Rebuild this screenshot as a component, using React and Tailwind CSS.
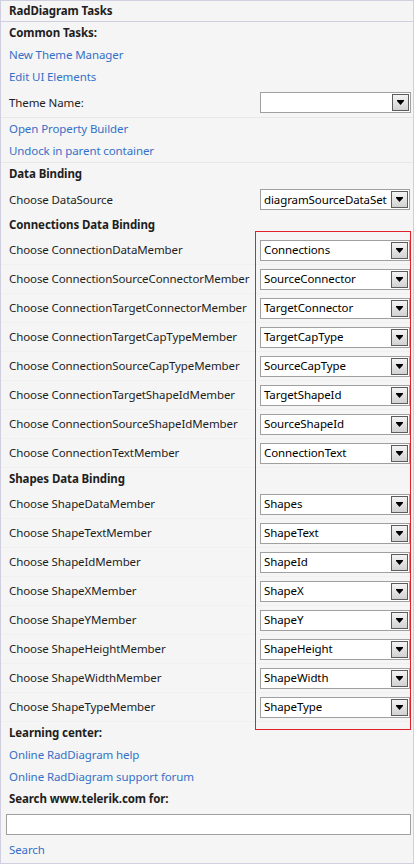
import React from "react";

const Arrow = () => (
  <div className="w-[17px] h-[17px] border border-[#5c5c5c] bg-gradient-to-b from-[#f4f4f4] to-[#d2d2d2] flex items-center justify-center shrink-0">
    <svg width="7" height="5" viewBox="0 0 7 5">
      <rect x="0" y="0" width="7" height="1" fill="#000" />
      <polygon points="0,1 7,1 3.5,5" fill="#000" />
    </svg>
  </div>
);

const Dropdown = ({ value = "" }) => (
  <div className="w-[150px] h-[21px] border border-[#a0a0a0] bg-white flex items-center justify-between pl-[3px] pr-px shrink-0">
    <span className="text-[#000] leading-none whitespace-nowrap">{value}</span>
    <Arrow />
  </div>
);

const Bold = ({ children }) => (
  <div className="h-[22px] flex items-center pl-[8px] font-bold text-[#1e1e1e] whitespace-nowrap">{children}</div>
);

const Link = ({ children }) => (
  <div className="h-[22px] flex items-center pl-[8px] text-[#3470c8] whitespace-nowrap">{children}</div>
);

const DataRow = ({ label, value }) => (
  <div className="h-[29px] flex items-center justify-between pl-[8px] pr-[3px] border-b border-[#f0f0f0]">
    <span className="text-[#1e1e1e] whitespace-nowrap">{label}</span>
    <Dropdown value={value} />
  </div>
);

const connections = [
  ["Choose ConnectionDataMember", "Connections"],
  ["Choose ConnectionSourceConnectorMember", "SourceConnector"],
  ["Choose ConnectionTargetConnectorMember", "TargetConnector"],
  ["Choose ConnectionTargetCapTypeMember", "TargetCapType"],
  ["Choose ConnectionSourceCapTypeMember", "SourceCapType"],
  ["Choose ConnectionTargetShapeIdMember", "TargetShapeId"],
  ["Choose ConnectionSourceShapeIdMember", "SourceShapeId"],
  ["Choose ConnectionTextMember", "ConnectionText"],
];

const shapes = [
  ["Choose ShapeDataMember", "Shapes"],
  ["Choose ShapeTextMember", "ShapeText"],
  ["Choose ShapeIdMember", "ShapeId"],
  ["Choose ShapeXMember", "ShapeX"],
  ["Choose ShapeYMember", "ShapeY"],
  ["Choose ShapeHeightMember", "ShapeHeight"],
  ["Choose ShapeWidthMember", "ShapeWidth"],
  ["Choose ShapeTypeMember", "ShapeType"],
];

export default function App() {
  return (
    <div className="w-[414px] h-[864px] bg-[#f5f5f5] font-['Noto_Sans',sans-serif] text-[11.5px] tracking-[-0.1px] leading-none">
      <div className="relative h-full border border-[#cfcfdf] flex flex-col">
        <div className="h-[21px] flex items-center pl-[8px] font-bold text-[#1e1e1e] border-b border-[#cfcfdf]">
          RadDiagram Tasks
        </div>
        <Bold>Common Tasks:</Bold>
        <Link>New Theme Manager</Link>
        <Link>Edit UI Elements</Link>
        <div className="h-[30px] flex items-center justify-between pl-[8px] pr-[2px] border-b border-[#e8e8e8]">
          <span className="text-[#1e1e1e]">Theme Name:</span>
          <div className="w-[151px] h-[21px] border border-[#a0a0a0] bg-white flex items-center justify-end pr-px">
            <Arrow />
          </div>
        </div>
        <Link>Open Property Builder</Link>
        <div className="h-[23px] flex items-center pl-[8px] text-[#3470c8] border-b border-[#e8e8e8]">
          Undock in parent container
        </div>
        <Bold>Data Binding</Bold>
        <div className="h-[29px] flex items-center justify-between pl-[8px] pr-[3px]">
          <span className="text-[#1e1e1e]">Choose DataSource</span>
          <Dropdown value="diagramSourceDataSet" />
        </div>
        <Bold>Connections Data Binding</Bold>
        {connections.map(([l, v]) => (
          <DataRow key={l} label={l} value={v} />
        ))}
        <Bold>Shapes Data Binding</Bold>
        {shapes.map(([l, v]) => (
          <DataRow key={l} label={l} value={v} />
        ))}
        <Bold>Learning center:</Bold>
        <Link>Online RadDiagram help</Link>
        <Link>Online RadDiagram support forum</Link>
        <Bold>Search www.telerik.com for:</Bold>
        <div className="h-[29px] flex items-center pl-[5px] pr-[2px]">
          <div className="w-full h-[21px] border border-[#a0a0a0] bg-white" />
        </div>
        <Link>Search</Link>
        <div className="absolute left-[254px] top-[230px] w-[156px] h-[499px] border border-[#e0202a] pointer-events-none" />
      </div>
    </div>
  );
}
